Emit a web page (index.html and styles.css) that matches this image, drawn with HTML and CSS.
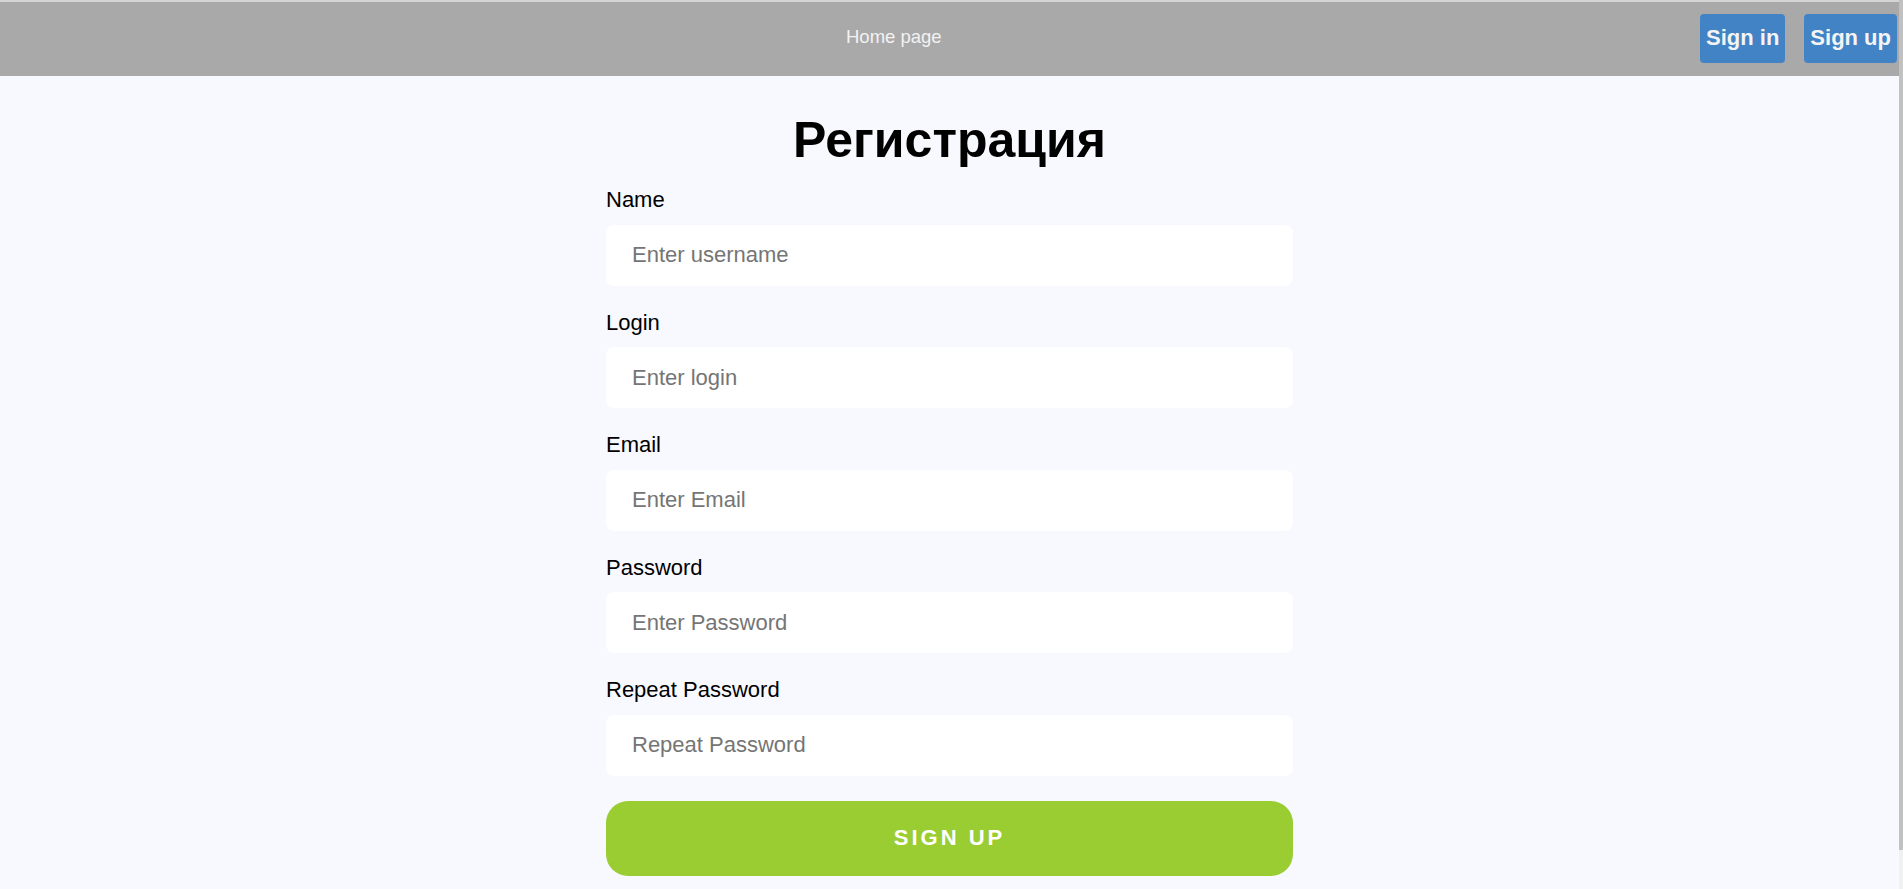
FILE: index.html
```html
<!DOCTYPE html>
<html lang="ru">
<head>
<meta charset="utf-8">
<title>Регистрация</title>
<link rel="stylesheet" href="styles.css">
</head>
<body>
<header class="topbar">
  <a class="home-link" href="#">Home page</a>
  <nav class="auth">
    <a class="auth-btn" href="#">Sign in</a>
    <a class="auth-btn" href="#">Sign up</a>
  </nav>
</header>
<main class="page">
  <form class="form">
    <h1 class="title">Регистрация</h1>
    <label class="field-label" for="name">Name</label>
    <input class="field-input" id="name" type="text" placeholder="Enter username">
    <label class="field-label" for="login">Login</label>
    <input class="field-input" id="login" type="text" placeholder="Enter login">
    <label class="field-label" for="email">Email</label>
    <input class="field-input" id="email" type="email" placeholder="Enter Email">
    <label class="field-label" for="pass">Password</label>
    <input class="field-input" id="pass" type="password" placeholder="Enter Password">
    <label class="field-label" for="pass2">Repeat Password</label>
    <input class="field-input" id="pass2" type="password" placeholder="Repeat Password">
    <button class="submit" type="button">SIGN UP</button>
  </form>
</main>
<div class="scrollbar" aria-hidden="true"><div class="scrollbar-thumb"></div></div>
</body>
</html>
```
FILE: styles.css
```css
html {
  background: #f8f8ff;
}
body {
  margin: 0 4px 0 0;
  background: #f8f8ff;
  font-family: "Liberation Sans", Arial, sans-serif;
  color: #000;
}
.scrollbar {
  position: fixed;
  top: 0;
  right: 0;
  bottom: 0;
  width: 4px;
  background: #f1f1f1;
}
.scrollbar-thumb {
  height: 850px;
  background: #c1c1c1;
}
.topbar {
  display: flex;
  align-items: center;
  height: 74px;
  border-top: 2px solid #d4d4d4;
  background: #a9a9a9;
}
.home-link {
  margin-left: 846px;
  margin-top: -5px;
  font-size: 18.5px;
  color: #f2f2f2;
  text-decoration: none;
}
.auth {
  display: flex;
  gap: 19px;
  margin-left: auto;
  margin-right: 2px;
  margin-top: -2px;
}
.auth-btn {
  display: flex;
  align-items: center;
  justify-content: center;
  height: 49px;
  padding: 0 6px;
  box-sizing: border-box;
  border-radius: 4px;
  background: #4183c5;
  color: #f4f4f4;
  font-size: 22px;
  font-weight: bold;
  text-decoration: none;
}
.page {
  padding: 35px 0 54px;
}
.form {
  display: flex;
  flex-direction: column;
  width: 687px;
  margin: 0 auto;
}
.title {
  margin: 0 0 18px;
  text-align: center;
  font-size: 50px;
  font-weight: bold;
}
.field-label {
  font-size: 22px;
  line-height: 25.5px;
  margin-bottom: 12px;
}
.field-input {
  height: 61px;
  box-sizing: border-box;
  margin: 0 0 24px;
  padding: 0 26px;
  border: none;
  border-radius: 8px;
  background: #fff;
  font-family: "Liberation Sans", Arial, sans-serif;
  font-size: 22px;
  color: #000;
  outline: none;
}
.field-input::placeholder {
  color: #757575;
}
.field-input:last-of-type {
  margin-bottom: 25px;
}
.submit {
  height: 75px;
  border: none;
  border-radius: 22px;
  background: #9acd32;
  color: #fff;
  font-family: "Liberation Sans", Arial, sans-serif;
  font-size: 22px;
  font-weight: bold;
  letter-spacing: 3px;
  cursor: pointer;
}
```
